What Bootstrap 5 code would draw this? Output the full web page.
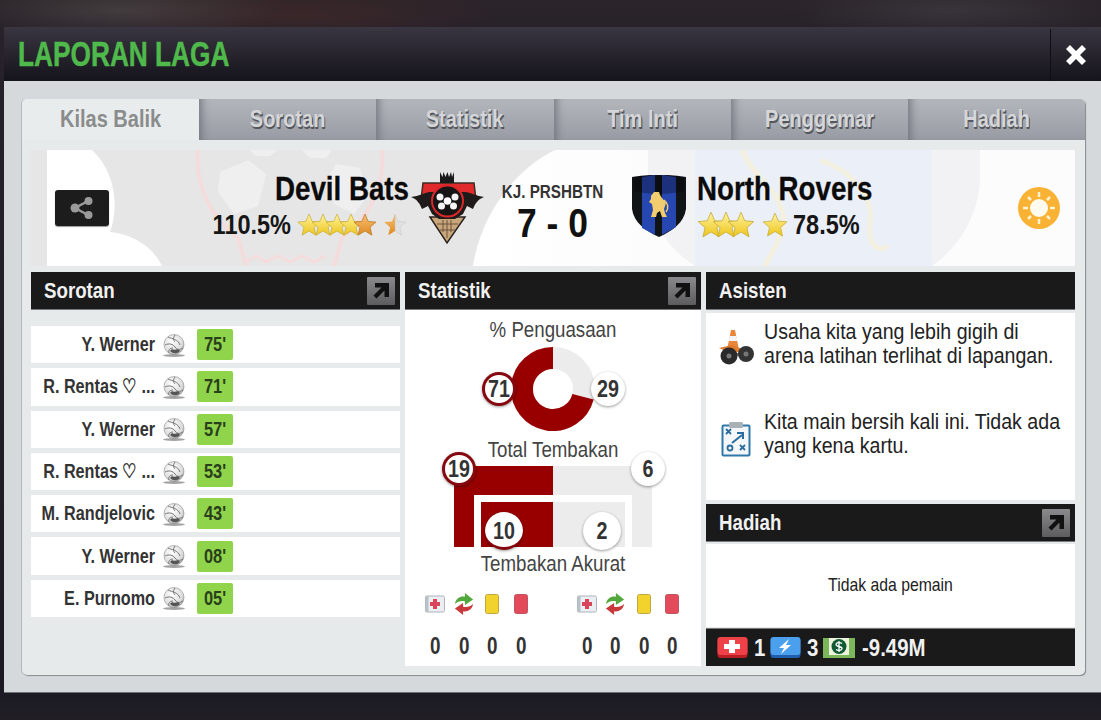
<!DOCTYPE html>
<html lang="id">
  <head>
    <meta charset="UTF-8" />
    <meta name="viewport" content="width=device-width, initial-scale=1.0" />
    <title>Laporan Laga</title>
    <link
      href="https://cdn.jsdelivr.net/npm/bootstrap@5.3.5/dist/css/bootstrap.min.css"
      rel="stylesheet"
    />
    <script src="https://cdn.jsdelivr.net/npm/bootstrap@5.3.5/dist/js/bootstrap.bundle.min.js"></script>
    <style>
      html, body { height: 720px; overflow: hidden; }
      body {
        margin: 0;
        background:
          radial-gradient(ellipse 160px 30px at 120px 10px, rgba(110, 105, 100, 0.35), transparent),
          radial-gradient(ellipse 200px 30px at 300px 15px, rgba(110, 50, 40, 0.25), transparent),
          radial-gradient(ellipse 160px 30px at 950px 10px, rgba(90, 90, 100, 0.3), transparent),
          linear-gradient(#2b2429 0, #28222a 27px, #1b1a22 692px, #211e26 720px);
        font-family: "Liberation Sans", Arial, sans-serif;
        color: #333;
      }
      /* the game font is a narrow helvetica, no narrow family here so squeeze the text box */
      .sq {
        --sq: 0.82;
        display: block;
        width: calc(100% / var(--sq));
        transform: scaleX(var(--sq));
        transform-origin: 0 50%;
        white-space: nowrap;
      }
      .report-modal { margin: 27px 0 0 4px; height: 665px; background: #d5d9dc; box-shadow: 0 1px 0 #6e7276; }
      .report-title { height: 54px; background: linear-gradient(#393641, #15131b); }
      .report-title h1 { flex: 1 1 auto; min-width: 0; margin: 0 0 0 14px; font-size: 35px; font-weight: 700; line-height: 54px; color: #50b94c; -webkit-text-stroke: 0.5px #50b94c; }
      .report-title h1 .sq { --sq: 0.75; }
      .close-box { width: 51px; height: 52px; margin-top: 2px; border-left: 1px solid #0f0e13; flex: none; }
      .inner-panel {
        margin: 18px 16px 0 18px;
        height: 576px;
        background: #e7eaeb;
        border-radius: 5px;
        box-shadow: 1px 1px 1px #85898c, -1px 0 0 #b4b8bb;
      }
      .tab-strip { height: 41px; }
      .tab-strip .nav-item { flex: 1 1 0; min-width: 0; }
      .tab-item {
        display: block;
        height: 41px;
        line-height: 41px;
        text-align: center;
        font-size: 23px;
        font-weight: 700;
        color: #d4d6d9;
        text-decoration: none;
        text-shadow: 1px 1px 0 #55575c, 1px 2px 0 #55575c;
        background: linear-gradient(#b3b7bc, #989ba3);
        box-shadow: inset 10px 0 10px -8px #6e7078;
      }
      .tab-item:hover { color: #d4d6d9; }
      .tab-item .sq { --sq: 0.87; }
      .tab-item.is-current {
        background: #e9eced;
        color: #8a8c8c;
        text-shadow: none;
        box-shadow: none;
        border-radius: 5px 0 0 0;
      }
      .tab-item.is-last { border-radius: 0 5px 0 0; }
      .match-banner {
        position: relative;
        height: 116px;
        margin: 10px 9px 0 8px;
        overflow: hidden;
        background: #e6e6e6;
      }
      .banner-art { position: absolute; inset: 0; }
      .banner-content { position: relative; height: 116px; padding-left: 25px; }
      .share-btn {
        flex: none;
        width: 54px;
        height: 36px;
        margin-top: 40px;
        background: #1c1c1c;
        border-radius: 3px;
        box-shadow: 0 1px 1px #999;
      }
      .team-home { flex: 0 0 376px; min-width: 0; padding-top: 20px; }
      .team-text { width: 270px; flex: none; }
      .team-name { font-size: 34px; font-weight: 700; line-height: 36px; color: #0b0b0b; -webkit-text-stroke: 0.3px #0b0b0b; }
      .team-name .sq { --sq: 0.815; }
      .team-rate { font-size: 27px; font-weight: 700; line-height: 30px; color: #161616; margin-top: 4px; }
      .team-rate .sq { --sq: 0.87; }
      .rate-num { width: 80px; flex: none; min-width: 0; }
      .crest-home { width: 74px; height: 75px; margin: 0 0 0 2px; flex: none; }
      .score-box { flex: 0 0 135px; min-width: 0; text-align: center; padding-top: 32px; }
      .score-label { font-size: 19px; font-weight: 700; line-height: 20px; color: #333; }
      .score-label .sq { --sq: 0.8; }
      .score-value { font-size: 40px; font-weight: 700; line-height: 42px; color: #111; }
      .score-value .sq { --sq: 0.886; }
      .team-away { flex: 1 1 auto; min-width: 0; padding: 20px 0 0 12px; }
      .crest-away { width: 56px; height: 62px; margin: 5px 9px 0 0; flex: none; }
      .weather-icon { width: 44px; height: 44px; margin: 16px 15px 0 0; flex: none; }
      .report-cols { margin: 6px 10px 0 9px; gap: 5px; height: 394px; }
      .col-goals { flex: 0 0 369px; min-width: 0; }
      .col-stats { flex: 0 0 296px; min-width: 0; }
      .col-aide { flex: 0 0 369px; min-width: 0; }
      .dark-head {
        height: 38px;
        background: #1a1a1a;
        color: #f1f1f1;
        font-size: 22px;
        font-weight: 700;
        line-height: 38px;
        padding-left: 13px;
        border-bottom: 1px solid #77797b;
      }
      .dark-head .sq { --sq: 0.85; }
      .head-text { flex: 1 1 auto; min-width: 0; }
      .expand-btn { width: 28px; height: 28px; margin: 5px 5px 0 0; display: block; flex: none; }
      .goal-list { padding-top: 16px; }
      .goal-row { height: 37.3px; margin-bottom: 5px; background: #fff; }
      .goal-name { flex: 0 0 124px; min-width: 0; text-align: right; font-size: 20px; font-weight: 700; color: #333; line-height: 37px; }
      .goal-name .sq { --sq: 0.81; }
      .goal-ball { width: 24px; height: 26px; margin: 2px 11px 0 7px; flex: none; }
      .goal-min {
        flex: none;
        width: 36px;
        height: 31px;
        padding: 0 4px;
        background: #8fd44a;
        border-radius: 2px;
        color: #2a3f1c;
        text-align: center;
        font-size: 20px;
        font-weight: 700;
        line-height: 31px;
      }
      .stats-body { background: #fff; height: 356px; text-align: center; }
      .stat-label { font-size: 22px; line-height: 24px; color: #444; }
      .stat-label .sq { --sq: 0.85; }
      .label-a { padding-top: 8px; height: 32px; }
      .label-b { margin-top: 7px; }
      .label-c { margin-top: 5px; position: relative; }
      .chart-donut { position: relative; height: 84px; margin-top: 5px; }
      .chart-bars { position: relative; height: 81px; margin-top: 4px; }
      .chart-svg { display: block; position: absolute; left: 0; top: 0; }
      .stat-pill {
        position: absolute;
        width: 34px;
        height: 34px;
        margin: -17px 0 0 -17px;
        border-radius: 50%;
        background: #fff;
        font-size: 24px;
        font-weight: 700;
        line-height: 33px;
        color: #333;
        text-align: center;
        box-shadow: 0 1px 3px rgba(0, 0, 0, 0.4);
      }
      .stat-pill.is-home { border: 3px solid #86090f; line-height: 27px; }
      .stat-pill.is-big { width: 38px; height: 38px; margin: -19px 0 0 -19px; line-height: 37px; }
      .stat-pill.is-big.is-home { border-width: 0 0 3px; line-height: 37px; }
      .pill-71 { left: 94px; top: 42px; }
      .pill-29 { left: 203px; top: 42px; }
      .pill-19 { left: 54px; top: 3px; }
      .pill-6 { left: 243px; top: 3px; }
      .pill-10 { left: 99px; top: 65px; }
      .pill-2 { left: 197px; top: 65px; }
      .event-row { padding-left: 16px; gap: 37.5px; }
      .event-icons { padding-top: 16px; }
      .event-nums { padding-top: 18px; }
      .event-group { display: grid; grid-template-columns: repeat(4, 28.5px); }
      .event-cell { height: 24px; }
      .event-cell svg { display: block; margin: 0 auto; }
      .event-num { height: 24px; min-width: 0; font-size: 23px; font-weight: 700; line-height: 24px; color: #333; }
      .aide-body { background: #fff; height: 187px; margin-top: 3px; padding: 7px 8px 0 13px; }
      .aide-note { height: 90px; color: #222; font-size: 22px; line-height: 23.5px; }
      .aide-note svg { flex: none; margin: 9px 9px 0 0; }
      .aide-text { flex: 1 1 auto; min-width: 0; }
      .aide-text .sq { --sq: 0.89; }
      .reward-head { margin-top: 4px; }
      .reward-empty { background: #fff; height: 83px; margin-top: 2px; font-size: 19px; color: #222; }
      .reward-empty .sq { --sq: 0.83; text-align: center; }
      .reward-empty-text { width: 100%; min-width: 0; }
      .reward-bar { height: 38px; margin-top: 1px; background: #1a1a1a; border-top: 1px solid #777; padding-left: 11px; color: #f1f1f1; font-size: 24px; font-weight: 700; line-height: 37px; }
      .reward-bar svg { flex: none; }
      .reward-bar .sq { --sq: 0.85; }
      .bar-num { flex: none; width: 11px; margin: 0 5px 0 6px; }
      .bar-money { flex: none; width: 70px; margin-left: 7px; }
    </style>
  </head>
  <body>
    <svg width="0" height="0" class="position-absolute">
      <defs>
        <linearGradient id="gradStar" x1="0" y1="0" x2="0" y2="1">
          <stop offset="0" stop-color="#fff3a0" /><stop offset="1" stop-color="#eec51a" />
        </linearGradient>
        <linearGradient id="gradOrange" x1="0" y1="0" x2="0" y2="1">
          <stop offset="0" stop-color="#f7c078" /><stop offset="1" stop-color="#e08a1e" />
        </linearGradient>
        <linearGradient id="gradBtn" x1="0" y1="0" x2="0" y2="1">
          <stop offset="0" stop-color="#8a8a8c" /><stop offset="1" stop-color="#5d5d60" />
        </linearGradient>
        <radialGradient id="gradBall" cx="0.4" cy="0.35" r="0.75">
          <stop offset="0" stop-color="#fff" /><stop offset="0.7" stop-color="#dcdcdc" /><stop offset="1" stop-color="#8a8a8a" />
        </radialGradient>
        <symbol id="star" viewBox="0 0 24 24">
          <path d="M12 1l3.200 7.400 7.800.7-5.900 5.200 1.800 7.900L12 18l-6.900 4.200 1.800-7.900L1 9.100l7.800-.7z" fill="url(#gradStar)" stroke="#c4ac3a" stroke-width="0.7" />
        </symbol>
        <symbol id="starOrange" viewBox="0 0 24 24">
          <path d="M12 1l3.200 7.400 7.800.7-5.900 5.200 1.800 7.900L12 18l-6.900 4.200 1.800-7.900L1 9.100l7.800-.7z" fill="url(#gradOrange)" stroke="#b8761f" stroke-width="0.7" />
        </symbol>
        <symbol id="ball" viewBox="0 0 24 26">
          <ellipse cx="12" cy="22.500" rx="11" ry="1.500" fill="#666" opacity="0.6" />
          <circle cx="12" cy="11.500" r="10" fill="url(#gradBall)" stroke="#8b8b8b" stroke-width="0.6" />
          <path d="M6 4c4 2 10 2 12 8M3 12c4-2 8-1 10 2s5 3 8 1M7 20c-1-3 1-5 4-5M13 2c-2 3-2 5 0 7" fill="none" stroke="#777" stroke-width="1" />
          <path d="M8 18c3 3 7 3 10 0l-2-2c-2 1-5 1-6 0z" fill="#555" />
        </symbol>
        <symbol id="expand" viewBox="0 0 28 28">
          <rect width="28" height="28" rx="1" fill="url(#gradBtn)" />
          <path d="M8 6h14v14h-4.500v-6.500L9.500 21.500 6.500 18.500 14.500 10.500H8z" fill="#111" />
        </symbol>
        <symbol id="medic" viewBox="0 0 20 18">
          <rect x="0.500" y="1" width="19" height="16" rx="1.500" fill="#eceff2" stroke="#aeb4ba" />
          <rect x="0.500" y="1" width="3" height="16" fill="#b8c0c8" />
          <path d="M8 4h4v3h3v4h-3v3H8v-3H5V7h3z" fill="#d9455a" />
        </symbol>
        <symbol id="swap" viewBox="0 0 22 26">
          <path d="M1 13C2 7 7 4 12 5V1l9 7-9 6V10C8 9 4 10 1 13z" fill="#52a83c" />
          <path d="M21 13c-1 6-6 9-11 8v4l-9-7 9-6v4c4 1 8 0 11-3z" fill="#c8393c" />
        </symbol>
        <symbol id="cardY" viewBox="0 0 14 20">
          <rect x="0.500" y="0.500" width="13" height="19" rx="2" fill="#f2d22c" stroke="#c0a93a" />
        </symbol>
        <symbol id="cardR" viewBox="0 0 14 20">
          <rect x="0.500" y="0.500" width="13" height="19" rx="2" fill="#e34a5a" stroke="#c2545f" />
        </symbol>
      </defs>
    </svg>

    <div class="report-modal">
      <div class="report-title d-flex justify-content-between">
        <h1><span class="sq">LAPORAN LAGA</span></h1>
        <div class="close-box d-flex align-items-center justify-content-center">
          <svg width="20" height="20" viewBox="0 0 20 20"><path d="M4 0l6 6 6-6 4 4-6 6 6 6-4 4-6-6-6 6-4-4 6-6-6-6z" fill="#fff" /></svg>
        </div>
      </div>

      <div class="inner-panel">
        <ul class="nav tab-strip">
          <li class="nav-item"><a class="tab-item is-current" href="#"><span class="sq">Kilas Balik</span></a></li>
          <li class="nav-item"><a class="tab-item" href="#"><span class="sq">Sorotan</span></a></li>
          <li class="nav-item"><a class="tab-item" href="#"><span class="sq">Statistik</span></a></li>
          <li class="nav-item"><a class="tab-item" href="#"><span class="sq">Tim Inti</span></a></li>
          <li class="nav-item"><a class="tab-item" href="#"><span class="sq">Penggemar</span></a></li>
          <li class="nav-item"><a class="tab-item is-last" href="#"><span class="sq">Hadiah</span></a></li>
        </ul>

        <div class="match-banner">
          <svg class="banner-art" width="1045" height="116" viewBox="0 0 1045 116">
            <defs>
              <linearGradient id="gradFade" x1="0" y1="0" x2="1" y2="0">
                <stop offset="0" stop-color="#fff" /><stop offset="1" stop-color="#f4f4f5" />
              </linearGradient>
            </defs>
            <path d="M17 0H62C84 20 90 55 80 82C105 84 125 100 132 116H17z" fill="#fff" />
            <path d="M168 0C164 40 186 72 208 88L216 116M352 0C356 40 334 72 312 88L304 116" fill="none" stroke="#f5dcdc" stroke-width="4" />
            <path d="M216 112l10-6 10 6 12-6 12 6 12-6 12 6 12-6" fill="none" stroke="#f5dcdc" stroke-width="3" />
            <path d="M190 22l28-12 18 14-8 32-24 8-16-22zM306 14l24 4 8 28-14 18-20-10-6-26zM220 0h28l-8 6h-14zM272 0h30l-6 8h-16z" fill="#efefef" />
            <path d="M443 116C450 70 480 22 525 0H1045V116z" fill="url(#gradFade)" />
            <rect x="620" width="425" height="116" fill="#fcfcfc" />
            <path d="M618 0H950V30C948 70 925 100 902 116H665C635 96 618 70 618 30z" fill="#f2f2f4" />
            <path d="M665 0H902V116H665z" fill="#ebeff8" />
            <path d="M712 0C722 25 740 30 752 60C758 80 745 95 735 116M790 10C820 20 845 45 840 75C838 95 850 105 858 95" fill="none" stroke="#f4f0e0" stroke-width="5" />
          </svg>
          <div class="banner-content d-flex">
            <div class="share-btn d-flex align-items-center justify-content-center">
              <svg width="26" height="24" viewBox="0 0 26 24">
                <path d="M19 5L6 12l13 7" fill="none" stroke="#9a9a9a" stroke-width="2.500" />
                <circle cx="19.500" cy="5" r="4" fill="#9a9a9a" /><circle cx="6" cy="12" r="4.500" fill="#9a9a9a" /><circle cx="19.500" cy="19" r="4" fill="#9a9a9a" />
              </svg>
            </div>
            <div class="team-home d-flex justify-content-end">
              <div class="team-text text-end">
                <div class="team-name"><span class="sq">Devil Bats</span></div>
                <div class="team-rate d-flex justify-content-end align-items-center">
                  <div class="rate-num"><span class="sq">110.5%</span></div>
                  <svg width="114" height="28" viewBox="0 0 114 28" class="ms-1">
                    <use href="#star" x="2" y="2" width="24" height="24" />
                    <use href="#star" x="16" y="2" width="24" height="24" />
                    <use href="#star" x="30" y="2" width="24" height="24" />
                    <use href="#star" x="44" y="2" width="24" height="24" />
                    <use href="#starOrange" x="58" y="2" width="24" height="24" />
                    <path d="M100 3l3 7.400 7.800.7-5.900 5.200 1.800 7.900-6.700-4.200z" fill="#dfe1e3" stroke="#c8cacc" stroke-width="0.600" />
                    <path d="M100 3l-3 7.400-7.800.7 5.900 5.200-1.800 7.900 6.700-4.200z" fill="url(#gradOrange)" />
                  </svg>
                </div>
              </div>
              <svg class="crest-home" viewBox="412 170 74 75">
                <path d="M424 183H475L477 200H422z" fill="#e02a2c" stroke="#3a2c22" stroke-width="1.500" />
                <path d="M441 183V172l2.500 5 1-5 2 5 2-5 1.500 5 2-5 1 5 2-5v11z" fill="#1a1a1a" />
                <path d="M431 217L448 243 466 217z" fill="#c9a67a" stroke="#2a2320" stroke-width="1.500" />
                <path d="M438 224h21M441 230h15M444 220v12M448 220v18M452 220v12" stroke="#6a5540" stroke-width="1" fill="none" />
                <path d="M412 197C420 196 426 193 430 192H467C472 193 478 196 485 197C479 199 476 204 474 209L468 206L464 214L456 219H440L433 214L429 206L423 209C421 204 418 199 412 197z" fill="#1f1b1a" />
                <circle cx="448.500" cy="201" r="15.500" fill="#161414" stroke="#d9272a" stroke-width="2" />
                <circle cx="448.500" cy="201" r="3.800" fill="#fff" /><circle cx="441" cy="197" r="3.500" fill="#f4f4f4" /><circle cx="456" cy="197" r="3.500" fill="#f4f4f4" /><circle cx="442.500" cy="206" r="3.500" fill="#f4f4f4" /><circle cx="454.500" cy="206" r="3.500" fill="#f4f4f4" />
              </svg>
            </div>
            <div class="score-box">
              <div class="score-label"><span class="sq">KJ. PRSHBTN</span></div>
              <div class="score-value"><span class="sq">7 - 0</span></div>
            </div>
            <div class="team-away d-flex">
              <svg class="crest-away" viewBox="632 176 56 62">
                <path d="M632 178C650 175 668 175 686 178V210C684 224 672 232 659 238C646 232 634 224 632 210z" fill="#101417" />
                <path d="M642 178V229L655 236V176zM662 176V236L676 228V178z" fill="#2747b0" />
                <path d="M634 178C650 176 668 176 684 178V192C668 196 650 196 634 192z" fill="#000" opacity="0.3" />
                <path d="M651 197l3-4 5 0 1 3 2 3 4 5-2 6 1 4 2 4h-5l-2-6-3 2-1 4h-5l2-7-1-6-3-2 2-3z" fill="#f1cd70" />
                <path d="M664 201c4 3 5 8 2 12" fill="none" stroke="#f1cd70" stroke-width="1.500" />
              </svg>
              <div class="team-text">
                <div class="team-name"><span class="sq">North Rovers</span></div>
                <div class="team-rate d-flex align-items-center">
                  <svg width="96" height="28" viewBox="0 0 96 28">
                    <use href="#star" x="0" y="0" width="28" height="28" />
                    <use href="#star" x="15" y="0" width="28" height="28" />
                    <use href="#star" x="30" y="0" width="28" height="28" />
                    <use href="#star" x="65" y="1" width="26" height="26" />
                  </svg>
                  <div class="rate-num"><span class="sq">78.5%</span></div>
                </div>
              </div>
              <svg class="weather-icon ms-auto" viewBox="0 0 44 44">
                <circle cx="22" cy="22" r="21" fill="#f9b233" />
                <circle cx="22" cy="22" r="9" fill="#fffbee" />
                <path d="M22 6v5M22 33v5M6 22h5M33 22h5M11 11l3 3M30 30l3 3M33 11l-3 3M14 30l-3 3" stroke="#fff3cf" stroke-width="2.500" />
              </svg>
            </div>
          </div>
        </div>

        <div class="report-cols d-flex">
          <div class="col-goals">
            <div class="dark-head d-flex justify-content-between">
              <div class="head-text"><span class="sq">Sorotan</span></div>
              <svg class="expand-btn"><use href="#expand" /></svg>
            </div>
            <div class="goal-list">
              <div class="goal-row d-flex align-items-center"><div class="goal-name"><span class="sq">Y. Werner</span></div><svg class="goal-ball"><use href="#ball" /></svg><div class="goal-min"><span class="sq">75'</span></div></div>
              <div class="goal-row d-flex align-items-center"><div class="goal-name"><span class="sq">R. Rentas ♡ ...</span></div><svg class="goal-ball"><use href="#ball" /></svg><div class="goal-min"><span class="sq">71'</span></div></div>
              <div class="goal-row d-flex align-items-center"><div class="goal-name"><span class="sq">Y. Werner</span></div><svg class="goal-ball"><use href="#ball" /></svg><div class="goal-min"><span class="sq">57'</span></div></div>
              <div class="goal-row d-flex align-items-center"><div class="goal-name"><span class="sq">R. Rentas ♡ ...</span></div><svg class="goal-ball"><use href="#ball" /></svg><div class="goal-min"><span class="sq">53'</span></div></div>
              <div class="goal-row d-flex align-items-center"><div class="goal-name"><span class="sq">M. Randjelovic</span></div><svg class="goal-ball"><use href="#ball" /></svg><div class="goal-min"><span class="sq">43'</span></div></div>
              <div class="goal-row d-flex align-items-center"><div class="goal-name"><span class="sq">Y. Werner</span></div><svg class="goal-ball"><use href="#ball" /></svg><div class="goal-min"><span class="sq">08'</span></div></div>
              <div class="goal-row d-flex align-items-center"><div class="goal-name"><span class="sq">E. Purnomo</span></div><svg class="goal-ball"><use href="#ball" /></svg><div class="goal-min"><span class="sq">05'</span></div></div>
            </div>
          </div>

          <div class="col-stats">
            <div class="dark-head d-flex justify-content-between">
              <div class="head-text"><span class="sq">Statistik</span></div>
              <svg class="expand-btn"><use href="#expand" /></svg>
            </div>
            <div class="stats-body">
              <div class="stat-label label-a"><span class="sq">% Penguasaan</span></div>
              <div class="chart-donut">
                <svg class="chart-svg" width="296" height="84" viewBox="0 0 296 84">
                  <circle cx="148" cy="42" r="31" fill="none" stroke="#ececec" stroke-width="22" />
                  <path d="M148 11A31 31 0 1 0 178 49.700" fill="none" stroke="#980000" stroke-width="22" />
                </svg>
                <div class="stat-pill is-home pill-71"><span class="sq">71</span></div>
                <div class="stat-pill pill-29"><span class="sq">29</span></div>
              </div>
              <div class="stat-label label-b"><span class="sq">Total Tembakan</span></div>
              <div class="chart-bars">
                <svg class="chart-svg" width="296" height="81" viewBox="0 0 296 81">
                  <rect x="49" width="99" height="81" fill="#980000" />
                  <rect x="148" width="99" height="81" fill="#ececec" />
                  <rect x="69" y="29" width="158" height="52" fill="#fff" />
                  <rect x="76" y="36" width="72" height="45" fill="#980000" />
                  <rect x="148" y="36" width="72" height="45" fill="#ececec" />
                </svg>
                <div class="stat-pill is-home pill-19"><span class="sq">19</span></div>
                <div class="stat-pill pill-6"><span class="sq">6</span></div>
                <div class="stat-pill is-big is-home pill-10"><span class="sq">10</span></div>
                <div class="stat-pill is-big pill-2"><span class="sq">2</span></div>
              </div>
              <div class="stat-label label-c"><span class="sq">Tembakan Akurat</span></div>
              <div class="d-flex event-row event-icons">
                <div class="event-group">
                  <div class="event-cell"><svg width="20" height="24" viewBox="0 0 20 24"><use href="#medic" y="3" width="20" height="18" /></svg></div>
                  <div class="event-cell"><svg width="20" height="24" viewBox="0 0 22 26"><use href="#swap" width="22" height="26" /></svg></div>
                  <div class="event-cell"><svg width="14" height="24" viewBox="0 0 14 24"><use href="#cardY" y="2" width="14" height="20" /></svg></div>
                  <div class="event-cell"><svg width="14" height="24" viewBox="0 0 14 24"><use href="#cardR" y="2" width="14" height="20" /></svg></div>
                </div>
                <div class="event-group">
                  <div class="event-cell"><svg width="20" height="24" viewBox="0 0 20 24"><use href="#medic" y="3" width="20" height="18" /></svg></div>
                  <div class="event-cell"><svg width="20" height="24" viewBox="0 0 22 26"><use href="#swap" width="22" height="26" /></svg></div>
                  <div class="event-cell"><svg width="14" height="24" viewBox="0 0 14 24"><use href="#cardY" y="2" width="14" height="20" /></svg></div>
                  <div class="event-cell"><svg width="14" height="24" viewBox="0 0 14 24"><use href="#cardR" y="2" width="14" height="20" /></svg></div>
                </div>
              </div>
              <div class="d-flex event-row event-nums">
                <div class="event-group">
                  <div class="event-num"><span class="sq">0</span></div><div class="event-num"><span class="sq">0</span></div><div class="event-num"><span class="sq">0</span></div><div class="event-num"><span class="sq">0</span></div>
                </div>
                <div class="event-group">
                  <div class="event-num"><span class="sq">0</span></div><div class="event-num"><span class="sq">0</span></div><div class="event-num"><span class="sq">0</span></div><div class="event-num"><span class="sq">0</span></div>
                </div>
              </div>
            </div>
          </div>

          <div class="col-aide">
            <div class="dark-head"><div class="head-text"><span class="sq">Asisten</span></div></div>
            <div class="aide-body">
              <div class="aide-note d-flex">
                <svg width="36" height="40" viewBox="0 0 36 40">
                  <path d="M12 1h4l4 20H8z" fill="#e8863a" /><path d="M10.500 7h7l1 5H9.500z" fill="#f4f4f4" />
                  <path d="M0 19l13-3 12 5-12 4z" fill="#e07b2c" />
                  <rect x="12" y="24" width="14" height="3" fill="#777" />
                  <circle cx="10" cy="27" r="8.500" fill="#2a2a2a" /><circle cx="27" cy="25" r="8" fill="#333" />
                  <circle cx="10" cy="27" r="2.500" fill="#777" /><circle cx="27" cy="25" r="2.500" fill="#777" />
                </svg>
                <div class="aide-text"><span class="sq">Usaha kita yang lebih gigih di<br />arena latihan terlihat di lapangan.</span></div>
              </div>
              <div class="aide-note d-flex">
                <svg width="36" height="40" viewBox="0 0 36 40">
                  <rect x="3.500" y="6.500" width="27" height="30" rx="1" fill="#f3f7fa" stroke="#2f78a8" stroke-width="2" />
                  <rect x="10" y="3" width="14" height="6" rx="1.500" fill="#a9b1b6" />
                  <path d="M7 14l5 5M12 14l-5 5M21 30l5 5M26 30l-5 5" stroke="#2a6d9c" stroke-width="1.800" transform="translate(0 -4)" />
                  <circle cx="11" cy="29" r="2.500" fill="none" stroke="#2a6d9c" stroke-width="1.800" />
                  <path d="M13 24l10-8M18 14h6v6" fill="none" stroke="#2a6d9c" stroke-width="2" />
                </svg>
                <div class="aide-text"><span class="sq">Kita main bersih kali ini. Tidak ada<br />yang kena kartu.</span></div>
              </div>
            </div>
            <div class="dark-head reward-head d-flex justify-content-between">
              <div class="head-text"><span class="sq">Hadiah</span></div>
              <svg class="expand-btn"><use href="#expand" /></svg>
            </div>
            <div class="reward-empty d-flex align-items-center justify-content-center"><div class="reward-empty-text"><span class="sq">Tidak ada pemain</span></div></div>
            <div class="reward-bar d-flex align-items-center">
              <svg width="31" height="22" viewBox="0 0 31 22">
                <rect x="0.500" y="1" width="30" height="20" rx="3" fill="#b81f24" />
                <rect x="0.500" y="0" width="30" height="18" rx="3" fill="#ee4248" />
                <path d="M12 3h6v4h5v5h-5v4h-6v-4H7V7h5z" fill="#fff" />
              </svg>
              <div class="bar-num"><span class="sq">1</span></div>
              <svg width="31" height="22" viewBox="0 0 31 22">
                <rect x="0.500" y="1" width="30" height="20" rx="3" fill="#1f5fae" />
                <rect x="0.500" y="0" width="30" height="18" rx="3" fill="#4ba0ee" />
                <path d="M19 2L9 11h5l-3 6 10-9h-5z" fill="#fff" />
              </svg>
              <div class="bar-num"><span class="sq">3</span></div>
              <svg width="32" height="22" viewBox="0 0 32 22">
                <rect x="0" y="1" width="32" height="20" fill="#7cb65a" />
                <rect x="6" y="1" width="20" height="17" fill="#eef3dd" />
                <circle cx="16" cy="9.500" r="7.500" fill="#0e5a32" />
                <path d="M19 6.500c-2-1.500-6-1-6 1 0 2.500 6 1.500 6 4 0 2-4 2.500-6 1M16 4v11" fill="none" stroke="#fff" stroke-width="1.300" />
              </svg>
              <div class="bar-money"><span class="sq">-9.49M</span></div>
            </div>
          </div>
        </div>
      </div>
    </div>
  </body>
</html>
